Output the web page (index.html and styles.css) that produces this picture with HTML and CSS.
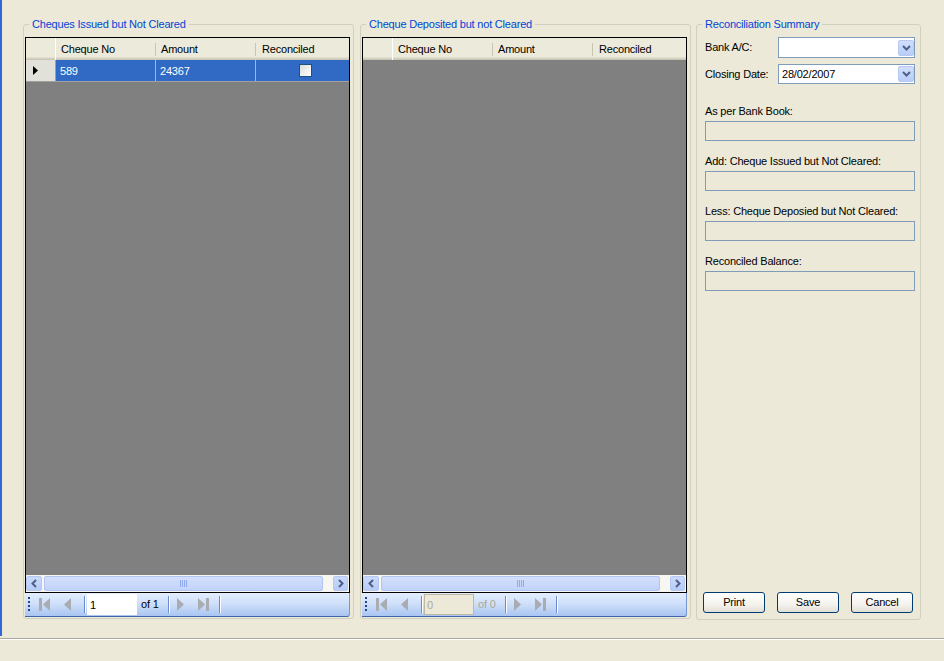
FILE: index.html
```html
<!DOCTYPE html>
<html>
<head>
<meta charset="utf-8">
<title>Bank Reconciliation</title>
<link rel="stylesheet" href="styles.css">
</head>
<body>
<div class="main">
  <fieldset class="group group-grid">
    <legend>Cheques Issued but Not Cleared</legend>
    <div class="grid">
      <div class="grid-head">
        <div class="rh"></div>
        <div class="hc c1">Cheque No</div>
        <div class="hc c2">Amount</div>
        <div class="hc c3">Reconciled</div>
      </div>
      <div class="grid-row selected">
        <div class="rh"><svg width="5" height="9" viewBox="0 0 5 9"><path d="M0 0 L5 4.5 L0 9Z" fill="#000"/></svg></div>
        <div class="cell c1">589</div>
        <div class="cell c2">24367</div>
        <div class="cell c3"><span class="check"></span></div>
      </div>
      <div class="grid-body"></div>
      <div class="hscroll">
        <div class="sb-btn"><svg width="8" height="9" viewBox="0 0 8 9"><path d="M6 1 L2.5 4.5 L6 8" stroke="#4d6185" stroke-width="2" fill="none"/></svg></div>
        <div class="sb-thumb"><svg width="8" height="7" viewBox="0 0 8 7"><path d="M0.5 0V7M2.5 0V7M4.5 0V7M6.5 0V7" stroke="#8ea8ea" stroke-width="1"/></svg></div>
        <div class="sb-btn"><svg width="8" height="9" viewBox="0 0 8 9"><path d="M2 1 L5.5 4.5 L2 8" stroke="#4d6185" stroke-width="2" fill="none"/></svg></div>
      </div>
    </div>
    <div class="nav">
      <div class="grip"><svg width="3" height="15" viewBox="0 0 3 15"><path d="M0 0h2v2h-2zM0 4h2v2h-2zM0 8h2v2h-2zM0 12h2v2h-2z" fill="#27418e"/></svg></div>
      <div class="nav-btn"><svg width="11" height="13" viewBox="0 0 11 13"><rect x="0" y="0" width="3" height="13" fill="#a9acb1"/><path d="M11 0 L4 6.5 L11 13Z" fill="#a9acb1"/></svg></div>
      <div class="nav-btn"><svg width="7" height="13" viewBox="0 0 7 13"><path d="M7 0 L0 6.5 L7 13Z" fill="#a9acb1"/></svg></div>
      <div class="sep sep-first"></div>
      <div class="nav-input">1</div>
      <div class="nav-of">of 1</div>
      <div class="sep"></div>
      <div class="nav-btn"><svg width="7" height="13" viewBox="0 0 7 13"><path d="M0 0 L7 6.5 L0 13Z" fill="#a9acb1"/></svg></div>
      <div class="nav-btn"><svg width="11" height="13" viewBox="0 0 11 13"><path d="M0 0 L7 6.5 L0 13Z" fill="#a9acb1"/><rect x="8" y="0" width="3" height="13" fill="#a9acb1"/></svg></div>
      <div class="sep sep-last"></div>
    </div>
  </fieldset>

  <fieldset class="group group-grid">
    <legend>Cheque Deposited but not Cleared</legend>
    <div class="grid">
      <div class="grid-head">
        <div class="rh"></div>
        <div class="hc c1">Cheque No</div>
        <div class="hc c2">Amount</div>
        <div class="hc c3">Reconciled</div>
      </div>
      <div class="grid-body"></div>
      <div class="hscroll">
        <div class="sb-btn"><svg width="8" height="9" viewBox="0 0 8 9"><path d="M6 1 L2.5 4.5 L6 8" stroke="#4d6185" stroke-width="2" fill="none"/></svg></div>
        <div class="sb-thumb"><svg width="8" height="7" viewBox="0 0 8 7"><path d="M0.5 0V7M2.5 0V7M4.5 0V7M6.5 0V7" stroke="#8ea8ea" stroke-width="1"/></svg></div>
        <div class="sb-btn"><svg width="8" height="9" viewBox="0 0 8 9"><path d="M2 1 L5.5 4.5 L2 8" stroke="#4d6185" stroke-width="2" fill="none"/></svg></div>
      </div>
    </div>
    <div class="nav">
      <div class="grip"><svg width="3" height="15" viewBox="0 0 3 15"><path d="M0 0h2v2h-2zM0 4h2v2h-2zM0 8h2v2h-2zM0 12h2v2h-2z" fill="#27418e"/></svg></div>
      <div class="nav-btn"><svg width="11" height="13" viewBox="0 0 11 13"><rect x="0" y="0" width="3" height="13" fill="#a9acb1"/><path d="M11 0 L4 6.5 L11 13Z" fill="#a9acb1"/></svg></div>
      <div class="nav-btn"><svg width="7" height="13" viewBox="0 0 7 13"><path d="M7 0 L0 6.5 L7 13Z" fill="#a9acb1"/></svg></div>
      <div class="sep sep-first"></div>
      <div class="nav-input disabled">0</div>
      <div class="nav-of disabled-text">of 0</div>
      <div class="sep"></div>
      <div class="nav-btn"><svg width="7" height="13" viewBox="0 0 7 13"><path d="M0 0 L7 6.5 L0 13Z" fill="#a9acb1"/></svg></div>
      <div class="nav-btn"><svg width="11" height="13" viewBox="0 0 11 13"><path d="M0 0 L7 6.5 L0 13Z" fill="#a9acb1"/><rect x="8" y="0" width="3" height="13" fill="#a9acb1"/></svg></div>
      <div class="sep sep-last"></div>
    </div>
  </fieldset>

  <fieldset class="group group-summary">
    <legend>Reconciliation Summary</legend>
    <div class="form-row">
      <span class="form-label">Bank A/C:</span>
      <div class="combo">
        <span class="combo-text"></span>
        <span class="combo-btn"><svg width="9" height="6" viewBox="0 0 9 6"><path d="M1 1 L4.5 4.5 L8 1" stroke="#4d6185" stroke-width="2" fill="none"/></svg></span>
      </div>
    </div>
    <div class="form-row row-date">
      <span class="form-label">Closing Date:</span>
      <div class="combo">
        <span class="combo-text">28/02/2007</span>
        <span class="combo-btn"><svg width="9" height="6" viewBox="0 0 9 6"><path d="M1 1 L4.5 4.5 L8 1" stroke="#4d6185" stroke-width="2" fill="none"/></svg></span>
      </div>
    </div>
    <div class="field-label first">As per Bank Book:</div>
    <div class="field-box"></div>
    <div class="field-label">Add: Cheque Issued but Not Cleared:</div>
    <div class="field-box"></div>
    <div class="field-label">Less: Cheque Deposied but Not Cleared:</div>
    <div class="field-box"></div>
    <div class="field-label">Reconciled Balance:</div>
    <div class="field-box"></div>
    <div class="buttons">
      <button class="btn">Print</button>
      <button class="btn">Save</button>
      <button class="btn">Cancel</button>
    </div>
  </fieldset>
</div>
<div class="statusbar"></div>
</body>
</html>
```
FILE: styles.css
```css
* { box-sizing: border-box; }
html, body { margin: 0; padding: 0; }
body {
  width: 944px;
  height: 661px;
  overflow: hidden;
  background: #ece9d8;
  font: 11px/13px "Liberation Sans", Arial, sans-serif;
  letter-spacing: -0.2px;
  color: #000;
}
.main {
  height: 636px;
  border-left: 2px solid #3168d5;
  padding: 18px 0 0 21px;
  display: flex;
  align-items: flex-start;
}
.statusbar {
  margin-top: 2px;
  height: 23px;
  border-top: 1px solid #aca899;
  box-shadow: inset 0 1px #fff;
}

/* group boxes */
.group {
  margin: 0;
  border: 1px solid #d0d0bf;
  border-radius: 3px;
  display: flex;
  flex-direction: column;
  min-width: 0;
}
.group legend {
  color: #0046d5;
  padding: 0 3px;
  margin-left: 4px;
  line-height: 13px;
}
.group-grid {
  width: 331px;
  height: 601px;
  padding: 6px 2px 1px 1px;
}
.group-grid + .group-grid { margin-left: 6px; }
.group-summary {
  width: 225px;
  height: 602px;
  margin-left: 5px;
  padding: 6px 5px 6px 8px;
}
.group-summary legend { margin-left: -3px; }

/* data grid */
.grid {
  flex: 1;
  display: flex;
  flex-direction: column;
  border: 1px solid #000;
  width: 325px;
  min-height: 0;
}
.grid-head {
  display: flex;
  height: 22px;
  flex: none;
  background: linear-gradient(#ebeadb 0 19px, #e2decd 19px 20px, #d6d2c2 20px 21px, #cbc7b8 21px);
}
.grid-head .rh {
  width: 30px;
  border-right: 1px solid #fff;
}
.hc {
  line-height: 22px;
  padding-left: 5px;
  background: linear-gradient(#c7c5b2, #c7c5b2) right 0 top 5px / 1px 13px no-repeat;
}
.c1 { width: 100px; }
.c2 { width: 100px; }
.c3 { flex: 1; }
.hc.c3 { padding-left: 6px; background: none; }

.grid-row {
  display: flex;
  height: 22px;
  flex: none;
  border-bottom: 1px solid #a0a0a0;
}
.grid-row .rh {
  width: 30px;
  background: #e2e1d9;
  border-right: 1px solid #a0a0a0;
  display: flex;
  align-items: center;
  padding-left: 7px;
}
.cell {
  line-height: 22px;
  padding-left: 4px;
  border-right: 1px solid #b4b4b4;
}
.selected .cell { background: #316ac5; color: #fff; }
.cell.c3 {
  border-right: none;
  display: flex;
  align-items: center;
  justify-content: center;
  padding-left: 6px;
}
.check {
  width: 13px;
  height: 13px;
  border: 1px solid #1c5180;
  background: linear-gradient(135deg, #dcdcd7, #fff);
}
.grid-body {
  flex: 1;
  background: #808080;
}

/* horizontal scrollbar */
.hscroll {
  height: 17px;
  flex: none;
  display: flex;
  align-items: stretch;
  background: #f7f6f1;
  padding: 1px 1px 1px 0;
}
.sb-btn {
  width: 16px;
  border: 1px solid #b4c8f4;
  border-radius: 2px;
  background: linear-gradient(#cbdafc, #b7cbf7);
  display: flex;
  align-items: center;
  justify-content: center;
}
.sb-btn:last-child { width: 15px; }
.sb-thumb {
  flex: 1;
  margin: 0 10px 0 2px;
  border: 1px solid #b1c5f3;
  border-radius: 2px;
  background: linear-gradient(#d3dffc, #c2d3fa);
  display: flex;
  align-items: center;
  justify-content: center;
}

/* navigator toolbar */
.nav {
  height: 24px;
  flex: none;
  width: 325px;
  display: flex;
  align-items: center;
  padding-left: 3px;
  background: linear-gradient(#e3eefe, #d0e0fa 45%, #a9c5f1);
  border-bottom: 1px solid #3f64ad;
  border-right: 1px solid #7797d4;
  border-radius: 0 0 3px 0;
}
.grip { width: 5px; display: flex; }
.nav-btn {
  width: 23px;
  display: flex;
  justify-content: center;
  align-items: center;
}
.sep {
  width: 1px;
  height: 17px;
  background: #6a8bd0;
  box-shadow: 1px 0 #fff;
  margin-right: 0;
}
.sep-first { margin-left: 5px; margin-right: 2px; }
.sep-last { margin-left: 4px; }
.nav-input {
  width: 50px;
  height: 21px;
  background: #fff;
  line-height: 22px;
  padding-left: 3px;
}
.nav-input.disabled {
  background: #ece9d8;
  border: 1px solid #bdb89f;
  color: #aca899;
  line-height: 20px;
  padding-left: 2px;
}
.nav-of {
  width: 31px;
  padding-left: 4px;
}
.disabled-text { color: #aca899; }

/* summary form */
.form-row {
  display: flex;
  align-items: center;
  height: 21px;
}
.row-date { margin-top: 6px; height: 20px; }
.form-label { width: 73px; }
.combo {
  width: 137px;
  height: 100%;
  border: 1px solid #7f9db9;
  background: #fff;
  display: flex;
  align-items: center;
  padding-left: 3px;
}
.combo-text { flex: 1; }
.combo-btn {
  width: 16px;
  height: 16px;
  border: 1px solid #b7c9f3;
  border-radius: 2px;
  background: linear-gradient(#d1defd, #b9cdf8);
  display: flex;
  align-items: center;
  justify-content: center;
}
.field-label { margin-top: 14px; }
.field-label.first { margin-top: 21px; }
.field-box {
  margin-top: 3px;
  width: 210px;
  height: 20px;
  border: 1px solid #7f9db9;
  background: #ece9d8;
}
.buttons {
  margin-top: auto;
  margin-left: -2px;
  display: flex;
  gap: 12px;
}
.btn {
  width: 62px;
  height: 21px;
  padding: 0;
  border: 1px solid #003c74;
  border-radius: 3px;
  background: linear-gradient(#ffffff, #f4f3ee 60%, #e2dfd3);
  font: 11px/19px "Liberation Sans", Arial, sans-serif;
  letter-spacing: -0.2px;
  color: #000;
}
```
